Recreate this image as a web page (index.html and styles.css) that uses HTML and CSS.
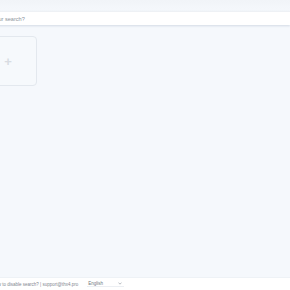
FILE: index.html
```html
<!DOCTYPE html>
<html lang="en">
<head>
    <meta charset="UTF-8">
    <meta name="viewport" content="width=device-width, initial-scale=1.0">
    <title>New Tab</title>
    <link rel="stylesheet" href="styles.css">
</head>
<body>
    <div class="page">
        <!-- Search box -->
        <div class="search-wrap">
            <div class="search-box">
                <span class="placeholder">What's your search?</span>
            </div>
        </div>

        <!-- Quick links -->
        <div class="tiles">
            <div class="tile tile-add">
                <span class="plus">+</span>
            </div>
        </div>
    </div>

    <footer class="footer">
        <div class="footer-inner">
            <span class="footer-text">How to disable search? | support@thx4.pro</span>
            <div class="lang-select">
                <span>English</span>
                <svg width="4" height="3" viewBox="0 0 4 3"><path d="M0.5 0.6 L2 2.2 L3.5 0.6" fill="none" stroke="#8a929c" stroke-width="0.6"/></svg>
            </div>
        </div>
    </footer>
</body>
</html>
```

FILE: styles.css
```css
html, body {
    height: 100%;
}

body {
    margin: 0;
    font-family: 'Liberation Sans', Arial, sans-serif;
    background-color: #f5f8fc;
    display: flex;
    flex-direction: column;
    overflow: hidden;
}

.page {
    flex: 1;
    background: linear-gradient(#f1f4f8, #f5f8fc 12px);
}

.search-wrap {
    padding-top: 11px;
    margin-left: -60px;
}

.search-box {
    height: 14px;
    background-color: #ffffff;
    border-top: 1px solid #eef1f5;
    box-shadow: 0 1px 2px rgba(150, 165, 185, 0.35);
    display: flex;
    align-items: center;
    padding-left: 34px;
    box-sizing: border-box;
}

.placeholder {
    font-size: 5.6px;
    color: #8d949c;
    white-space: nowrap;
}

.tiles {
    display: flex;
    margin-top: 11px;
    margin-left: -21px;
}

.tile {
    width: 58px;
    height: 50px;
    border: 1px solid #e3e8ee;
    border-radius: 4px;
    box-sizing: border-box;
    background-color: #f6f9fc;
    display: flex;
    align-items: center;
    justify-content: center;
}

.plus {
    font-size: 13px;
    line-height: 1;
    color: #d8dce2;
    font-weight: bold;
}

.footer {
    height: 12px;
    background-color: #ffffff;
    border-top: 1px solid #eef2f6;
}

.footer-inner {
    height: 100%;
    display: flex;
    align-items: center;
    margin-left: -8px;
    gap: 9px;
}

.footer-text {
    font-size: 4.5px;
    color: #7f8790;
    white-space: nowrap;
}

.lang-select {
    width: 37px;
    height: 6px;
    display: flex;
    align-items: center;
    justify-content: space-between;
    border-bottom: 1px solid #eceff3;
    font-size: 4.5px;
    color: #6f7780;
    padding: 0 2px 0 1px;
    box-sizing: border-box;
}
```
